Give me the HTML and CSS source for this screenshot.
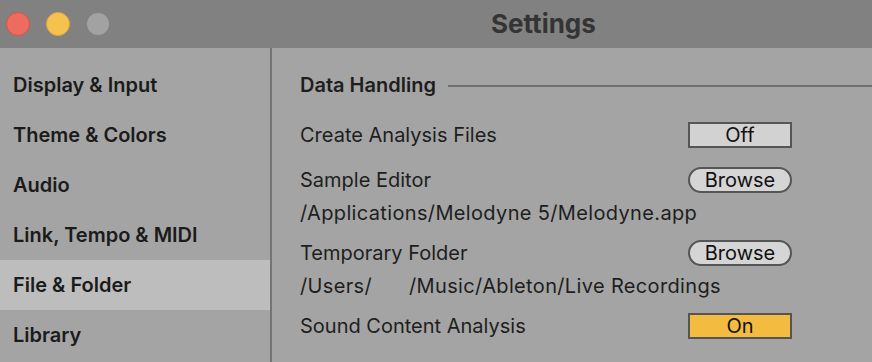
FILE: index.html
```html
<!DOCTYPE html>
<html>
<head>
<meta charset="utf-8">
<link rel="stylesheet" href="styles.css">
</head>
<body>
<div class="window">
  <header class="titlebar">
    <div class="lights">
      <span class="light red"></span>
      <span class="light yellow"></span>
      <span class="light gray"></span>
    </div>
    <div class="title">Settings</div>
  </header>
  <div class="body">
    <nav class="sidebar">
      <div class="nav-item">Display &amp; Input</div>
      <div class="nav-item">Theme &amp; Colors</div>
      <div class="nav-item">Audio</div>
      <div class="nav-item">Link, Tempo &amp; MIDI</div>
      <div class="nav-item active">File &amp; Folder</div>
      <div class="nav-item">Library</div>
    </nav>
    <main class="content">
      <div class="section-head">
        <span class="section-title">Data Handling</span>
        <span class="section-rule"></span>
      </div>
      <div class="row r1">
        <span class="label">Create Analysis Files</span>
        <span class="btn toggle">Off</span>
      </div>
      <div class="row r2">
        <span class="label">Sample Editor</span>
        <span class="btn pill">Browse</span>
      </div>
      <div class="path">/Applications/Melodyne 5/Melodyne.app</div>
      <div class="row r3">
        <span class="label">Temporary Folder</span>
        <span class="btn pill">Browse</span>
      </div>
      <div class="path"><span>/Users/</span><span class="gap"></span><span>/Music/Ableton/Live Recordings</span></div>
      <div class="row r4">
        <span class="label">Sound Content Analysis</span>
        <span class="btn toggle on">On</span>
      </div>
    </main>
  </div>
</div>
</body>
</html>
```
FILE: styles.css
```css
* { box-sizing: border-box; }
html, body { margin: 0; padding: 0; }
body {
  width: 872px;
  height: 362px;
  overflow: hidden;
  background: #a4a4a4;
  font-family: Inter, "Noto Sans", sans-serif;
  color: #1b1b1b;
}
.window { display: flex; flex-direction: column; height: 362px; }
.titlebar {
  height: 48px;
  background: #818181;
  display: flex;
  align-items: center;
  flex-shrink: 0;
}
.lights { display: flex; align-items: center; padding-left: 6px; gap: 16px; }
.light { display: block; width: 24px; height: 24px; border-radius: 50%; }
.light.red { background: #ee6b60; border: 1px solid #d4544a; }
.light.yellow { background: #f5c24f; border: 1px solid #dba73c; }
.light.gray { background: #a2a2a2; width: 22px; height: 22px; margin-left: 1px; }
.title {
  margin-left: 382px;
  font-size: 26px;
  font-weight: 700;
  color: #343434;
  margin-top: -1px;
}
.body { display: flex; flex: 1; }
.sidebar {
  width: 272px;
  border-right: 2px solid #747474;
  padding-top: 12px;
  display: flex;
  flex-direction: column;
}
.nav-item {
  height: 50px;
  display: flex;
  align-items: center;
  padding-left: 13px;
  font-size: 20px;
  font-weight: 600;
  color: #1b1b1b;
}
.nav-item.active { background: #bdbdbd; }
.content {
  flex: 1;
  padding: 12px 0 0 28px;
  display: flex;
  flex-direction: column;
}
.section-head {
  height: 50px;
  display: flex;
  align-items: center;
  gap: 12px;
}
.section-title { font-size: 20px; font-weight: 600; color: #1e1e1e; }
.section-rule { flex: 1; height: 2px; background: #6f6f6f; margin-top: 1px; }
.row {
  height: 40px;
  display: grid;
  grid-template-columns: 388px 104px;
  align-items: center;
}
.label { font-size: 20px; color: #1e1e1e; }
.r1 { margin-top: 5px; }
.r2 { margin-top: 5px; }
.r3 { margin-top: 7px; }
.r4 { margin-top: 7px; }
.path {
  height: 26px;
  display: flex;
  align-items: center;
  font-size: 20px;
  letter-spacing: 0.35px;
  color: #1e1e1e;
}
.gap { display: inline-block; width: 37px; }
.btn {
  height: 26px;
  border: 2px solid #555;
  background: #d2d2d2;
  display: flex;
  align-items: center;
  justify-content: center;
  font-size: 20px;
  color: #111;
}
.btn.pill { border-radius: 13px; background: #d5d5d5; }
.btn.on { background: #f4bb41; }
```
